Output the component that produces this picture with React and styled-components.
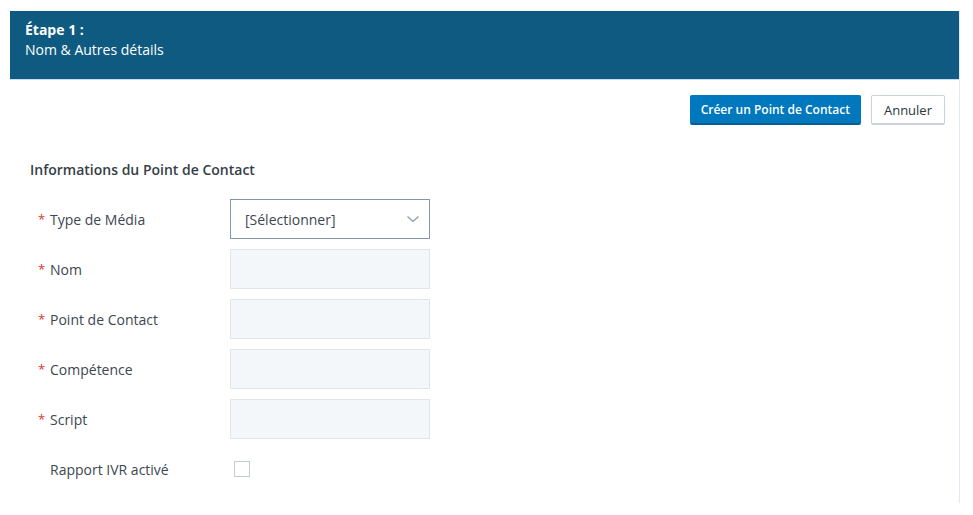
import React from "react";
import styled, { createGlobalStyle } from "styled-components";

const GlobalStyle = createGlobalStyle`
  html, body {
    margin: 0;
    padding: 0;
    background: #ffffff;
    font-family: "Open Sans", "Noto Sans", Arial, sans-serif;
  }
`;

const Page = styled.div`
  padding: 11px 13px 12px 10px;
`;

const Panel = styled.div`
  border-right: 1px solid #e3e9f0;
  min-height: 492px;
  box-sizing: border-box;
`;

const Header = styled.div`
  background: #0e5a80;
  color: #ffffff;
  height: 69px;
  box-sizing: border-box;
  padding: 9px 15px;
  border-bottom: 1px solid #c9dced;
  font-size: 14px;
  line-height: 20px;
`;

const StepTitle = styled.div`
  font-weight: 700;
`;

const Toolbar = styled.div`
  display: flex;
  justify-content: flex-end;
  gap: 10px;
  padding: 15px 14px 1px 0;
`;

const Button = styled.button`
  height: 30px;
  box-sizing: border-box;
  padding: ${(p) => (p.$primary ? "0 10px" : "0 12px")};
  font-family: inherit;
  font-size: ${(p) => (p.$primary ? "12px" : "13px")};
  border-radius: 2px;
  cursor: pointer;
  background: ${(p) => (p.$primary ? "#0078bd" : "#ffffff")};
  color: ${(p) => (p.$primary ? "#ffffff" : "#2c3640")};
  font-weight: ${(p) => (p.$primary ? 600 : 400)};
  border: 1px solid ${(p) => (p.$primary ? "#0078bd" : "#c9d2db")};
  border-bottom: 2px solid ${(p) => (p.$primary ? "#0b5e93" : "#c9d2db")};
`;

const Section = styled.div`
  padding: 34px 0 0 20px;
`;

const SectionTitle = styled.div`
  font-size: 14px;
  font-weight: 600;
  color: #363e47;
  line-height: 20px;
  margin-bottom: 19px;
`;

const Form = styled.div`
  display: flex;
  flex-direction: column;
  gap: 10px;
`;

const Row = styled.div`
  display: grid;
  grid-template-columns: 200px 200px;
  align-items: center;
  height: ${(p) => (p.$short ? "36px" : "40px")};
  margin-top: ${(p) => (p.$short ? "2px" : "0")};
`;

const Label = styled.div`
  display: flex;
  align-items: center;
  font-size: 14px;
  color: #3d4650;
  padding-left: 8px;
`;

const Star = styled.span`
  color: #e0352b;
  width: 12px;
  font-size: 13px;
`;

const Select = styled.div`
  height: 40px;
  box-sizing: border-box;
  border: 1px solid #8496ab;
  background: #ffffff;
  display: flex;
  align-items: center;
  justify-content: space-between;
  padding: 0 9px 0 14px;
  font-size: 14px;
  color: #3d4650;
`;

const Input = styled.div`
  height: 40px;
  box-sizing: border-box;
  border: 1px solid #dfe5ea;
  background: #f3f7fa;
`;

const Checkbox = styled.div`
  width: 16px;
  height: 16px;
  box-sizing: border-box;
  border: 1px solid #c3ccd5;
  background: #ffffff;
  margin-left: 4px;
`;

const Chevron = () => (
  <svg width="14" height="14" viewBox="0 0 14 14" fill="none">
    <path d="M1.5 4.5 L7 9.5 L12.5 4.5" stroke="#8a97a6" strokeWidth="1.2" />
  </svg>
);

const fields = ["Nom", "Point de Contact", "Compétence", "Script"];

export default function App() {
  return (
    <>
      <GlobalStyle />
      <Page>
        <Panel>
          <Header>
            <StepTitle>Étape 1 :</StepTitle>
            <div>Nom &amp; Autres détails</div>
          </Header>
          <Toolbar>
            <Button $primary>Créer un Point de Contact</Button>
            <Button>Annuler</Button>
          </Toolbar>
          <Section>
            <SectionTitle>Informations du Point de Contact</SectionTitle>
            <Form>
              <Row>
                <Label>
                  <Star>*</Star>Type de Média
                </Label>
                <Select>
                  [Sélectionner]
                  <Chevron />
                </Select>
              </Row>
              {fields.map((f) => (
                <Row key={f}>
                  <Label>
                    <Star>*</Star>
                    {f}
                  </Label>
                  <Input />
                </Row>
              ))}
              <Row $short>
                <Label>
                  <Star />
                  Rapport IVR activé
                </Label>
                <Checkbox />
              </Row>
            </Form>
          </Section>
        </Panel>
      </Page>
    </>
  );
}
